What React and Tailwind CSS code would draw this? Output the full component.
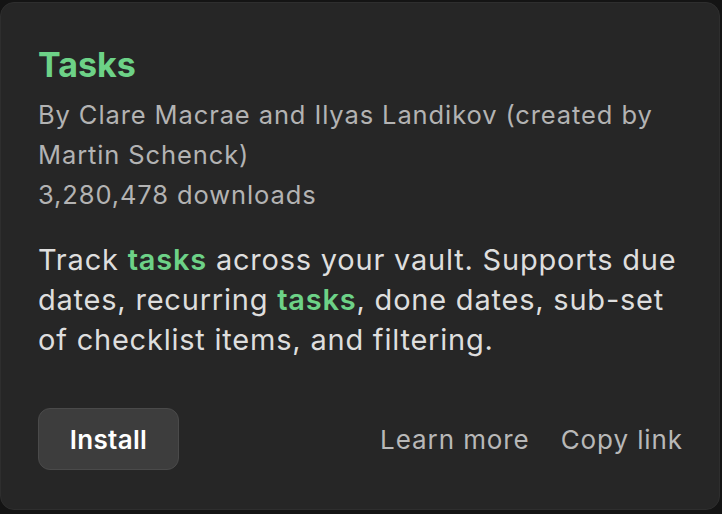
export default function App() {
  return (
    <div className="w-[722px] h-[514px] bg-[#141414] pt-[2px] pr-[2px] pb-[4px]" style={{ fontFamily: "Inter, 'Noto Sans', sans-serif" }}>
      <div className="h-full rounded-[14px] bg-[#262626] border border-[#2e2e2e] pl-[37px] pr-[36px] pt-[42px] flex flex-col">
        <div className="text-[34px] leading-[40px] font-bold text-[#6dd287]">Tasks</div>
        <div className="mt-[10px] text-[25.5px] leading-[40px] tracking-[0.035em] text-[#b3b3b3]">
          By Clare Macrae and Ilyas Landikov (created by Martin Schenck)
        </div>
        <div className="text-[25.5px] leading-[40px] tracking-[0.035em] text-[#b3b3b3]">3,280,478 downloads</div>
        <div className="mt-[25px] text-[29px] leading-[40px] tracking-[0.027em] text-[#dedede]">
          Track <span className="font-semibold text-[#6dd287]">tasks</span> across your vault. Supports due dates, recurring{" "}
          <span className="font-semibold text-[#6dd287]">tasks</span>, done dates, sub-set of checklist items, and filtering.
        </div>
        <div className="mt-[48px] flex items-center">
          <button className="h-[62px] w-[141px] rounded-[12px] bg-[#3d3d3d] border border-[#4a4a4a] text-[26px] font-semibold tracking-[0.012em] text-white">
            Install
          </button>
          <div className="ml-auto flex items-center gap-[31px] text-[26px] tracking-[0.035em] text-[#b8b8b8]">
            <span>Learn more</span>
            <span>Copy link</span>
          </div>
        </div>
      </div>
    </div>
  );
}
